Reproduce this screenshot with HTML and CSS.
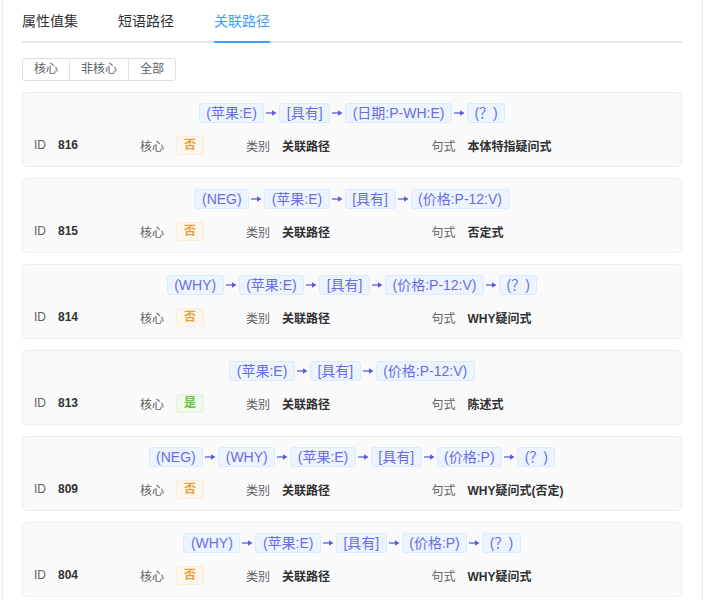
FILE: index.html
```html
<!DOCTYPE html>
<html lang="zh">
<head>
<meta charset="utf-8">
<link rel="stylesheet" href="styles.css">
</head>
<body>
<div class="page">
  <div class="tabs">
    <div class="tab">属性值集</div>
    <div class="tab">短语路径</div>
    <div class="tab active">关联路径</div>
  </div>
  <div class="btn-group">
    <button class="btn">核心</button>
    <button class="btn">非核心</button>
    <button class="btn">全部</button>
  </div>

  <div class="list">
    <div class="card">
      <div class="path">
        <span class="chip">(苹果:E)</span><span class="arr"><svg viewBox="0 0 11 8" width="11" height="8"><path d="M0 4H7" stroke="currentColor" stroke-width="1.3"/><path d="M6 1.2L10.5 4L6 6.8Z" fill="currentColor"/></svg></span>
        <span class="chip">[具有]</span><span class="arr"><svg viewBox="0 0 11 8" width="11" height="8"><path d="M0 4H7" stroke="currentColor" stroke-width="1.3"/><path d="M6 1.2L10.5 4L6 6.8Z" fill="currentColor"/></svg></span>
        <span class="chip">(日期:P-WH:E)</span><span class="arr"><svg viewBox="0 0 11 8" width="11" height="8"><path d="M0 4H7" stroke="currentColor" stroke-width="1.3"/><path d="M6 1.2L10.5 4L6 6.8Z" fill="currentColor"/></svg></span>
        <span class="chip">(？)</span>
      </div>
      <div class="info">
        <div class="cell"><span class="lbl">ID</span><span class="val">816</span></div>
        <div class="cell"><span class="lbl">核心</span><span class="tag no">否</span></div>
        <div class="cell"><span class="lbl">类别</span><span class="val">关联路径</span></div>
        <div class="cell"><span class="lbl">句式</span><span class="val">本体特指疑问式</span></div>
      </div>
    </div>

    <div class="card">
      <div class="path">
        <span class="chip">(NEG)</span><span class="arr"><svg viewBox="0 0 11 8" width="11" height="8"><path d="M0 4H7" stroke="currentColor" stroke-width="1.3"/><path d="M6 1.2L10.5 4L6 6.8Z" fill="currentColor"/></svg></span>
        <span class="chip">(苹果:E)</span><span class="arr"><svg viewBox="0 0 11 8" width="11" height="8"><path d="M0 4H7" stroke="currentColor" stroke-width="1.3"/><path d="M6 1.2L10.5 4L6 6.8Z" fill="currentColor"/></svg></span>
        <span class="chip">[具有]</span><span class="arr"><svg viewBox="0 0 11 8" width="11" height="8"><path d="M0 4H7" stroke="currentColor" stroke-width="1.3"/><path d="M6 1.2L10.5 4L6 6.8Z" fill="currentColor"/></svg></span>
        <span class="chip">(价格:P-12:V)</span>
      </div>
      <div class="info">
        <div class="cell"><span class="lbl">ID</span><span class="val">815</span></div>
        <div class="cell"><span class="lbl">核心</span><span class="tag no">否</span></div>
        <div class="cell"><span class="lbl">类别</span><span class="val">关联路径</span></div>
        <div class="cell"><span class="lbl">句式</span><span class="val">否定式</span></div>
      </div>
    </div>

    <div class="card">
      <div class="path">
        <span class="chip">(WHY)</span><span class="arr"><svg viewBox="0 0 11 8" width="11" height="8"><path d="M0 4H7" stroke="currentColor" stroke-width="1.3"/><path d="M6 1.2L10.5 4L6 6.8Z" fill="currentColor"/></svg></span>
        <span class="chip">(苹果:E)</span><span class="arr"><svg viewBox="0 0 11 8" width="11" height="8"><path d="M0 4H7" stroke="currentColor" stroke-width="1.3"/><path d="M6 1.2L10.5 4L6 6.8Z" fill="currentColor"/></svg></span>
        <span class="chip">[具有]</span><span class="arr"><svg viewBox="0 0 11 8" width="11" height="8"><path d="M0 4H7" stroke="currentColor" stroke-width="1.3"/><path d="M6 1.2L10.5 4L6 6.8Z" fill="currentColor"/></svg></span>
        <span class="chip">(价格:P-12:V)</span><span class="arr"><svg viewBox="0 0 11 8" width="11" height="8"><path d="M0 4H7" stroke="currentColor" stroke-width="1.3"/><path d="M6 1.2L10.5 4L6 6.8Z" fill="currentColor"/></svg></span>
        <span class="chip">(？)</span>
      </div>
      <div class="info">
        <div class="cell"><span class="lbl">ID</span><span class="val">814</span></div>
        <div class="cell"><span class="lbl">核心</span><span class="tag no">否</span></div>
        <div class="cell"><span class="lbl">类别</span><span class="val">关联路径</span></div>
        <div class="cell"><span class="lbl">句式</span><span class="val">WHY疑问式</span></div>
      </div>
    </div>

    <div class="card">
      <div class="path">
        <span class="chip">(苹果:E)</span><span class="arr"><svg viewBox="0 0 11 8" width="11" height="8"><path d="M0 4H7" stroke="currentColor" stroke-width="1.3"/><path d="M6 1.2L10.5 4L6 6.8Z" fill="currentColor"/></svg></span>
        <span class="chip">[具有]</span><span class="arr"><svg viewBox="0 0 11 8" width="11" height="8"><path d="M0 4H7" stroke="currentColor" stroke-width="1.3"/><path d="M6 1.2L10.5 4L6 6.8Z" fill="currentColor"/></svg></span>
        <span class="chip">(价格:P-12:V)</span>
      </div>
      <div class="info">
        <div class="cell"><span class="lbl">ID</span><span class="val">813</span></div>
        <div class="cell"><span class="lbl">核心</span><span class="tag yes">是</span></div>
        <div class="cell"><span class="lbl">类别</span><span class="val">关联路径</span></div>
        <div class="cell"><span class="lbl">句式</span><span class="val">陈述式</span></div>
      </div>
    </div>

    <div class="card">
      <div class="path">
        <span class="chip">(NEG)</span><span class="arr"><svg viewBox="0 0 11 8" width="11" height="8"><path d="M0 4H7" stroke="currentColor" stroke-width="1.3"/><path d="M6 1.2L10.5 4L6 6.8Z" fill="currentColor"/></svg></span>
        <span class="chip">(WHY)</span><span class="arr"><svg viewBox="0 0 11 8" width="11" height="8"><path d="M0 4H7" stroke="currentColor" stroke-width="1.3"/><path d="M6 1.2L10.5 4L6 6.8Z" fill="currentColor"/></svg></span>
        <span class="chip">(苹果:E)</span><span class="arr"><svg viewBox="0 0 11 8" width="11" height="8"><path d="M0 4H7" stroke="currentColor" stroke-width="1.3"/><path d="M6 1.2L10.5 4L6 6.8Z" fill="currentColor"/></svg></span>
        <span class="chip">[具有]</span><span class="arr"><svg viewBox="0 0 11 8" width="11" height="8"><path d="M0 4H7" stroke="currentColor" stroke-width="1.3"/><path d="M6 1.2L10.5 4L6 6.8Z" fill="currentColor"/></svg></span>
        <span class="chip">(价格:P)</span><span class="arr"><svg viewBox="0 0 11 8" width="11" height="8"><path d="M0 4H7" stroke="currentColor" stroke-width="1.3"/><path d="M6 1.2L10.5 4L6 6.8Z" fill="currentColor"/></svg></span>
        <span class="chip">(？)</span>
      </div>
      <div class="info">
        <div class="cell"><span class="lbl">ID</span><span class="val">809</span></div>
        <div class="cell"><span class="lbl">核心</span><span class="tag no">否</span></div>
        <div class="cell"><span class="lbl">类别</span><span class="val">关联路径</span></div>
        <div class="cell"><span class="lbl">句式</span><span class="val">WHY疑问式(否定)</span></div>
      </div>
    </div>

    <div class="card">
      <div class="path">
        <span class="chip">(WHY)</span><span class="arr"><svg viewBox="0 0 11 8" width="11" height="8"><path d="M0 4H7" stroke="currentColor" stroke-width="1.3"/><path d="M6 1.2L10.5 4L6 6.8Z" fill="currentColor"/></svg></span>
        <span class="chip">(苹果:E)</span><span class="arr"><svg viewBox="0 0 11 8" width="11" height="8"><path d="M0 4H7" stroke="currentColor" stroke-width="1.3"/><path d="M6 1.2L10.5 4L6 6.8Z" fill="currentColor"/></svg></span>
        <span class="chip">[具有]</span><span class="arr"><svg viewBox="0 0 11 8" width="11" height="8"><path d="M0 4H7" stroke="currentColor" stroke-width="1.3"/><path d="M6 1.2L10.5 4L6 6.8Z" fill="currentColor"/></svg></span>
        <span class="chip">(价格:P)</span><span class="arr"><svg viewBox="0 0 11 8" width="11" height="8"><path d="M0 4H7" stroke="currentColor" stroke-width="1.3"/><path d="M6 1.2L10.5 4L6 6.8Z" fill="currentColor"/></svg></span>
        <span class="chip">(？)</span>
      </div>
      <div class="info">
        <div class="cell"><span class="lbl">ID</span><span class="val">804</span></div>
        <div class="cell"><span class="lbl">核心</span><span class="tag no">否</span></div>
        <div class="cell"><span class="lbl">类别</span><span class="val">关联路径</span></div>
        <div class="cell"><span class="lbl">句式</span><span class="val">WHY疑问式</span></div>
      </div>
    </div>
  </div>
</div>
</body>
</html>
```
FILE: styles.css
```css
html, body {
  margin: 0;
  padding: 0;
  background: #ffffff;
}
body {
  font-family: "Liberation Sans", "Noto Sans CJK SC", sans-serif;
  color: #303133;
}
.page {
  margin-left: 2px;
  width: 660px;
  min-height: 100vh;
  border-left: 1px solid #e8e8ee;
  border-right: 1px solid #e8e8ee;
  padding: 1px 20px 0 19px;
}
.tabs {
  display: flex;
  gap: 40px;
  height: 40px;
  border-bottom: 2px solid #e4e7ed;
  margin-bottom: 15px;
}
.tab {
  font-size: 14px;
  line-height: 40px;
  height: 40px;
  color: #303133;
}
.tab.active {
  color: #409eff;
  height: 42px;
  margin-bottom: -2px;
  box-sizing: border-box;
  border-bottom: 2px solid #409eff;
}
.btn-group {
  display: inline-flex;
  margin-bottom: 11px;
}
.btn {
  font-family: inherit;
  font-size: 12px;
  color: #606266;
  background: #fff;
  border: 1px solid #dcdfe6;
  height: 23px;
  line-height: 21px;
  padding: 0 11px;
  margin: 0;
  margin-left: -1px;
}
.btn:first-child {
  margin-left: 0;
  border-radius: 3px 0 0 3px;
}
.btn:last-child {
  border-radius: 0 3px 3px 0;
}
.list {
  display: flex;
  flex-direction: column;
  gap: 11px;
}
.card {
  background: #fafafa;
  border: 1px solid #ebeef5;
  border-radius: 4px;
  height: 75px;
  box-sizing: border-box;
  padding: 10px 11px 0 11px;
}
.path {
  display: flex;
  justify-content: center;
  align-items: center;
  height: 20px;
}
.chip {
  font-size: 14px;
  height: 20px;
  line-height: 18px;
  box-sizing: border-box;
  padding: 0 6.5px;
  background: #ecf5ff;
  border: 1px solid #d9ecff;
  border-radius: 3px;
  color: #6b6be6;
  white-space: nowrap;
}
.arr {
  display: flex;
  align-items: center;
  color: #5b5be0;
  margin: 0 2px;
}
.arr svg {
  display: block;
}
.info {
  display: grid;
  grid-template-columns: 4fr 4fr 7fr 9fr;
  margin-top: 12px;
  height: 20px;
  align-items: center;
}
.cell {
  display: flex;
  align-items: center;
  gap: 12px;
  font-size: 12px;
}
.lbl {
  color: #606266;
}
.val {
  color: #303133;
  font-weight: bold;
}
.tag {
  display: inline-block;
  width: 28px;
  height: 19px;
  line-height: 17px;
  box-sizing: border-box;
  text-align: center;
  border-radius: 3px;
  font-size: 12px;
  font-weight: bold;
}
.tag.no {
  background: #fdf6ec;
  border: 1px solid #faecd8;
  color: #e6a23c;
}
.tag.yes {
  background: #f0f9eb;
  border: 1px solid #e1f3d8;
  color: #67c23a;
}
```
